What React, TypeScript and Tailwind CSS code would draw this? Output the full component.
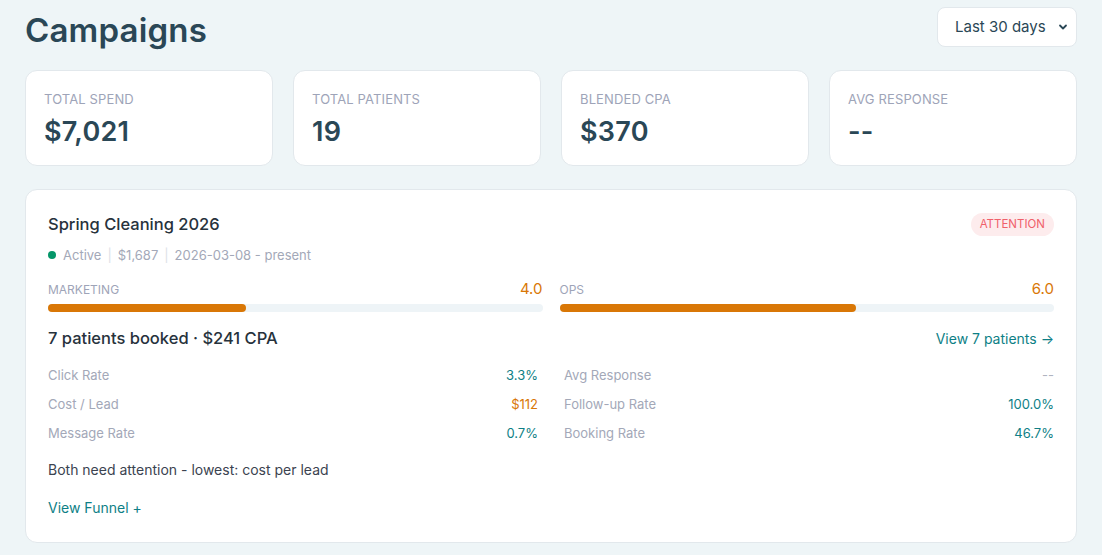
import React from "react";

const font = { fontFamily: '"Inter", "Noto Sans", sans-serif' };

function Stat({ label, value }: { label: string; value: string }) {
  return (
    <div className="h-[96px] rounded-xl border border-[#e2e8ec] bg-white px-[18px] pt-[20px]">
      <div className="text-[13px] leading-[16px] uppercase text-[#9ea4b8] tracking-[0.01em]">{label}</div>
      <div className="mt-[9px] text-[27px] leading-[32px] font-semibold text-[#2a4756] tracking-[0.01em]">{value}</div>
    </div>
  );
}

function Metric({ label, value, color }: { label: string; value: string; color: string }) {
  return (
    <div className="flex h-[29px] items-center justify-between text-[13px]">
      <span className="text-[#a3a8b8]">{label}</span>
      <span className={color}>{value}</span>
    </div>
  );
}

function Bar({ label, score, pct }: { label: string; score: string; pct: number }) {
  return (
    <div className="flex-1">
      <div className="flex items-end justify-between">
        <span className="text-[12px] leading-[16px] text-[#9ea4b8]">{label}</span>
        <span className="text-[15px] leading-[18px] text-[#d97706]">{score}</span>
      </div>
      <div className="mt-[6px] h-[8px] rounded-full bg-[#eef4f7]">
        <div className="h-[8px] rounded-full bg-[#d97706]" style={{ width: `${pct}%` }} />
      </div>
    </div>
  );
}

export default function App() {
  return (
    <div className="min-h-screen bg-[#eef5f7] px-[25px] pt-[7px] pb-[12px]" style={font}>
      <div className="flex items-start justify-between">
        <h1 className="pt-[3px] text-[33px] leading-[40px] font-semibold text-[#2a4756] tracking-[0.005em]">Campaigns</h1>
        <div className="flex h-[40px] w-[140px] items-center justify-between rounded-lg border border-[#e2e8ec] bg-white pl-[17px] pr-[8px] text-[15px] text-[#2a4756]">
          <span>Last 30 days</span>
          <svg width="10" height="10" viewBox="0 0 10 10" fill="none">
            <path d="M2 3.5 L5 6.5 L8 3.5" stroke="#2a4756" strokeWidth="1.8" strokeLinecap="round" strokeLinejoin="round" />
          </svg>
        </div>
      </div>

      <div className="mt-[20px] grid grid-cols-4 gap-5">
        <Stat label="Total Spend" value="$7,021" />
        <Stat label="Total Patients" value="19" />
        <Stat label="Blended CPA" value="$370" />
        <Stat label="Avg Response" value="--" />
      </div>

      <div className="mt-[23px] rounded-xl border border-[#e2e8ec] bg-white px-[22px] pt-[22px] pb-[24px]">
        <div className="flex items-start justify-between">
          <h2 className="text-[16.5px] leading-[24px] font-medium text-[#27323c]">Spring Cleaning 2026</h2>
          <span className="mt-[1px] rounded-full bg-[#fdeced] px-[9px] py-[4px] text-[11.5px] leading-[15px] text-[#f0606a]">ATTENTION</span>
        </div>
        <div className="mt-[10px] flex items-center text-[13px] leading-[18px] text-[#a3a8b8]">
          <span className="mr-[7px] inline-block h-[8px] w-[8px] rounded-full bg-[#059669]" />
          <span>Active</span>
          <span className="mx-[6px] text-[#dde1e7]">|</span>
          <span>$1,687</span>
          <span className="mx-[6px] text-[#dde1e7]">|</span>
          <span>2026-03-08 - present</span>
        </div>

        <div className="mt-[16px] flex gap-[17px]">
          <Bar label="MARKETING" score="4.0" pct={40} />
          <Bar label="OPS" score="6.0" pct={60} />
        </div>

        <div className="mt-[14px] flex items-center justify-between">
          <span className="text-[16.5px] leading-[24px] font-medium text-[#27323c]">7 patients booked · $241 CPA</span>
          <span className="text-[14px] text-[#0e7f86]">View 7 patients →</span>
        </div>

        <div className="mt-[11px] grid grid-cols-2 gap-x-[26px]">
          <div>
            <Metric label="Click Rate" value="3.3%" color="text-[#0e7f86]" />
            <Metric label="Cost / Lead" value="$112" color="text-[#d97706]" />
            <Metric label="Message Rate" value="0.7%" color="text-[#0e7f86]" />
          </div>
          <div>
            <Metric label="Avg Response" value="--" color="text-[#b0b4c0]" />
            <Metric label="Follow-up Rate" value="100.0%" color="text-[#0e7f86]" />
            <Metric label="Booking Rate" value="46.7%" color="text-[#0e7f86]" />
          </div>
        </div>

        <div className="mt-[12px] text-[14px] leading-[20px] text-[#3b4350]">Both need attention - lowest: cost per lead</div>
        <div className="mt-[18px] text-[14px] leading-[20px] text-[#0e7f86]">View Funnel +</div>
      </div>
    </div>
  );
}
